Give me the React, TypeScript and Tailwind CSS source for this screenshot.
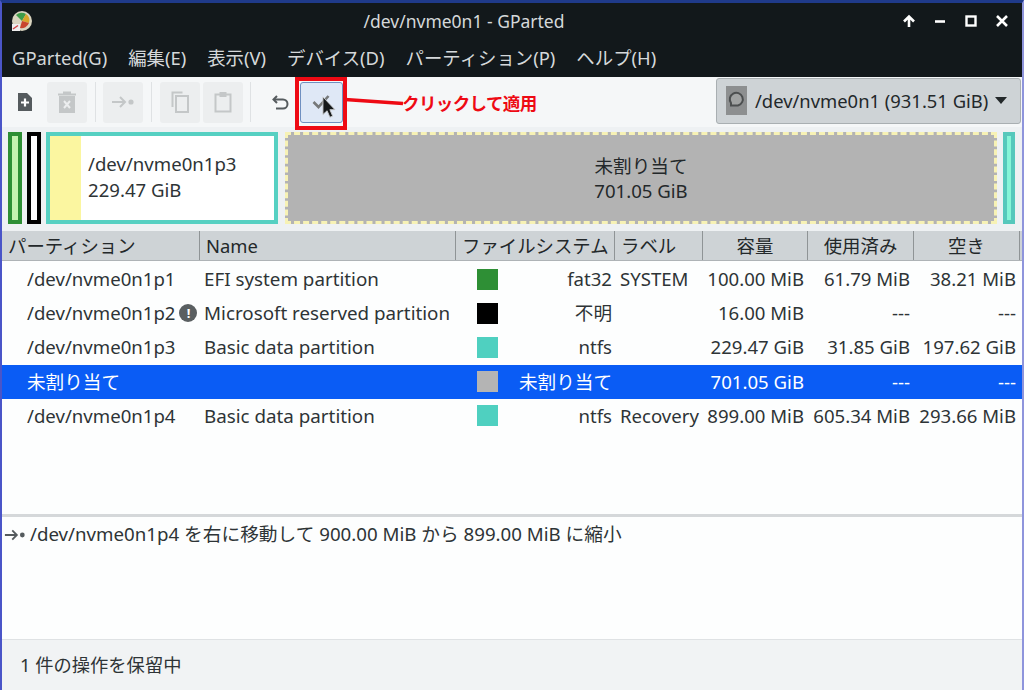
import React from "react";

const font = { fontFamily: '"Noto Sans","Noto Sans CJK JP",sans-serif' };
const cols = "grid grid-cols-[200px_256px_159px_88px_105px_106px_106px]";

const Sep = ({ className }: { className: string }) => <div className={`w-px h-[40px] bg-[#dfe2e4] ${className}`} />;

function ToolBtn({ children, className = "" }: { children: React.ReactNode; className?: string }) {
  return <div className={`w-10 h-[41px] rounded-[3px] bg-[#eceeef] flex items-center justify-center ${className}`}>{children}</div>;
}

const rows = [
  { d: "/dev/nvme0n1p1", warn: false, n: "EFI system partition", c: "bg-[#2e8f35]", fs: "fat32", l: "SYSTEM", s: "100.00 MiB", u: "61.79 MiB", f: "38.21 MiB" },
  { d: "/dev/nvme0n1p2", warn: true, n: "Microsoft reserved partition", c: "bg-black", fs: "不明", l: "", s: "16.00 MiB", u: "---", f: "---" },
  { d: "/dev/nvme0n1p3", warn: false, n: "Basic data partition", c: "bg-[#4fd0c0]", fs: "ntfs", l: "", s: "229.47 GiB", u: "31.85 GiB", f: "197.62 GiB" },
  { d: "未割り当て", warn: false, n: "", c: "bg-[#b4b4b4]", fs: "未割り当て", l: "", s: "701.05 GiB", u: "---", f: "---", sel: true },
  { d: "/dev/nvme0n1p4", warn: false, n: "Basic data partition", c: "bg-[#4fd0c0]", fs: "ntfs", l: "Recovery", s: "899.00 MiB", u: "605.34 MiB", f: "293.66 MiB" },
];

const headers = ["パーティション", "Name", "ファイルシステム", "ラベル", "容量", "使用済み", "空き"];

export default function App() {
  return (
    <div style={font} className="relative w-[1024px] h-[690px] overflow-hidden bg-[#fdfefe] text-[#2e3436] text-[18.6px] leading-[24px] border-l-2 border-r-2 border-t-[3px] border-l-[#4a55c8] border-r-[#8f95dc] border-t-[#1f3a8a] flex flex-col">
      {/* Title bar */}
      <div className="h-[35px] shrink-0 bg-[#12181b] flex items-center relative px-[9px]">
        <svg width="22" height="22" viewBox="0 0 22 22">
          <circle cx="11" cy="11" r="10" fill="#d9d4c0" />
          <path d="M11 11 L5 5 A8 8 0 0 1 15 4 Z" fill="#3f9c4a" />
          <path d="M11 11 L15 4 A8 8 0 0 1 18 13 Z" fill="#d9a52a" />
          <path d="M11 11 L18 13 A8 8 0 0 1 9 18 Z" fill="#c8452f" />
          <path d="M1 21 L1 14 L9 14 L9 21 Z" fill="#eeeeee" />
          <path d="M2 19 L7 15.5" stroke="#c44" strokeWidth="1.5" />
        </svg>
        <div className="absolute left-0 right-0 text-center text-[17.5px] text-[#d5d8da] pr-[96px]">/dev/nvme0n1 - GParted</div>
        <div className="ml-auto flex items-center gap-[17px] pr-[4px]">
          <svg width="14" height="14" viewBox="0 0 14 14" fill="none" stroke="#fff" strokeWidth="2.6"><path d="M7 13V3M2 7.5L7 2.5l5 5" /></svg>
          <svg width="14" height="14" viewBox="0 0 14 14" fill="none" stroke="#fff" strokeWidth="2.6"><path d="M2 7.5h10" /></svg>
          <svg width="14" height="14" viewBox="0 0 14 14" fill="none" stroke="#fff" strokeWidth="2.4"><rect x="2.5" y="2.5" width="9" height="9" /></svg>
          <svg width="14" height="14" viewBox="0 0 14 14" fill="none" stroke="#fff" strokeWidth="2.6"><path d="M2 2l10 10M12 2L2 12" /></svg>
        </div>
      </div>
      {/* Menu */}
      <div className="h-[39px] shrink-0 bg-[#12181b] text-[#d5d8da] text-[18.4px] flex items-center pl-[10px] gap-[21px]">
        {["GParted(G)", "編集(E)", "表示(V)", "デバイス(D)", "パーティション(P)", "ヘルプ(H)"].map((m) => (
          <span key={m}>{m}</span>
        ))}
      </div>
      {/* Toolbar */}
      <div className="h-[50px] shrink-0 bg-[#f5f7f8] flex items-center pl-[3px] relative">
        <div className="w-10 h-10 flex items-center justify-center">
          <svg width="18" height="20" viewBox="0 0 18 20"><path d="M2 1h9l5 5v13H2z" fill="#555b5e" /><path d="M9 6.5v8M5 10.5h8" stroke="#fff" strokeWidth="2.2" /></svg>
        </div>
        <ToolBtn className="ml-[2px]">
          <svg width="20" height="22" viewBox="0 0 20 22" fill="none" stroke="#c4c7c8" strokeWidth="2"><path d="M1 3.5h18M7 3.5V1.5h6v2" /><rect x="3" y="6" width="14" height="15" fill="#c4c7c8" /><path d="M7 10l6 7M13 10l-6 7" stroke="#eceeef" /></svg>
        </ToolBtn>
        <Sep className="ml-[8px] mr-[7px]" />
        <ToolBtn>
          <svg width="24" height="14" viewBox="0 0 24 14" fill="none" stroke="#c4c7c8" strokeWidth="2"><path d="M1 7h13M9 2l5 5-5 5" /><circle cx="20" cy="7" r="1.6" fill="#c4c7c8" /></svg>
        </ToolBtn>
        <Sep className="ml-[8px] mr-[8px]" />
        <ToolBtn>
          <svg width="18" height="22" viewBox="0 0 18 22" fill="none" stroke="#c4c7c8" strokeWidth="2"><path d="M1.5 16V1.5h10" /><rect x="5" y="5" width="12" height="16" /></svg>
        </ToolBtn>
        <ToolBtn className="ml-[3px]">
          <svg width="18" height="22" viewBox="0 0 18 22" fill="none" stroke="#c4c7c8" strokeWidth="2"><rect x="1.5" y="3.5" width="15" height="17" /><rect x="5.5" y="1" width="7" height="5" fill="#c4c7c8" stroke="none" /></svg>
        </ToolBtn>
        <Sep className="ml-[7px] mr-[9px]" />
        <div className="w-10 h-10 flex items-center justify-center">
          <svg width="17" height="15" viewBox="0 0 17 15" fill="none" stroke="#555b5e" strokeWidth="2"><path d="M5 1L1.5 4.5 5 8" /><path d="M2 4.5h9a4.5 4.5 0 0 1 0 9H4" /></svg>
        </div>
        <div className="w-[43px] h-[41px] rounded-[3px] border border-[#6f8fc0] bg-[#dfe8f6] flex items-center justify-center">
          <svg width="24" height="14" viewBox="0 0 24 14" fill="none" stroke="#77797a" strokeWidth="2.6"><path d="M3.5 7l5 5L18.5 1" /></svg>
        </div>
        <div className="ml-auto mt-[-3px] w-[305px] h-[46px] rounded-[3px] border border-[#a9afb2] bg-[#ced3d6] flex items-center pl-[9px] mr-[1px] whitespace-nowrap">
          <svg width="21" height="29" viewBox="0 0 21 29"><rect width="21" height="29" fill="#8d8f90" /><path d="M5 17 A6.5 6.5 0 1 1 12 19.5 L5 19.5 Z" fill="#a0a2a2" stroke="#4c4f50" strokeWidth="2" /></svg>
          <span className="ml-[8px] text-[#23282a] text-[18.4px]">/dev/nvme0n1 (931.51 GiB)</span>
          <svg className="ml-[7px]" width="12" height="7" viewBox="0 0 12 7"><path d="M0 0h12L6 7z" fill="#23282a" /></svg>
        </div>
      </div>
      {/* Disk map */}
      <div className="h-[104px] shrink-0 bg-[#eef1f3] flex items-start pt-[5px] pl-[6px]">
        <div className="w-[14px] h-[92px] bg-[#2e8f35] p-[4px]"><div className="h-full bg-[#c5f2b0]" /></div>
        <div className="w-[14px] h-[92px] bg-black p-[4px] ml-[5px]"><div className="h-full bg-white" /></div>
        <div className="w-[232px] h-[92px] bg-[#56d0c2] p-[4px] ml-[5px]">
          <div className="h-full bg-white flex">
            <div className="w-[31px] bg-[#fbf6a0]" />
            <div className="pl-[7px] pt-[15px] leading-[26px] text-[#2e3436] whitespace-nowrap">/dev/nvme0n1p3<br />229.47 GiB</div>
          </div>
        </div>
        <div className="w-[712px] h-[92px] ml-[7px] bg-[#b3b3b3] border-[3px] border-dashed border-[#f7f2b5] flex flex-col items-center justify-center leading-[25px] text-[#23282a]">
          <span>未割り当て</span>
          <span>701.05 GiB</span>
        </div>
        <div className="w-[12px] h-[92px] ml-[6px] bg-[#56c8bc] p-[4px]"><div className="h-full bg-[#86f5d8]" /></div>
      </div>
      {/* Table header */}
      <div className={`${cols} h-[30px] shrink-0 bg-[#ced3d6] text-[#23282a] text-[18.4px] -ml-[2px] border-b border-[#aeb3b6]`}>
        {headers.map((h, i) => (
          <div key={h} className={`flex items-center px-[6px] border-r border-[#8f9496] whitespace-nowrap overflow-hidden ${i === 0 ? "pl-[8px]" : ""} ${i >= 4 ? "justify-center" : ""}`}>{h}</div>
        ))}
      </div>
      {/* Rows */}
      <div className="h-[253px] shrink-0 bg-[#fdfefe] pt-[1px]">
        {rows.map((r) => (
          <div key={r.d + r.n} className={`${cols} h-[34.2px] items-center whitespace-nowrap -ml-[2px] ${r.sel ? "bg-[#0a5cf5] text-white" : ""}`}>
            <div className="pl-[27px] flex items-center">
              {r.d}
              {r.warn && (
                <span className="ml-[4px] w-[18px] h-[18px] rounded-full bg-[#5a5f61] text-white text-[13px] font-bold flex items-center justify-center">!</span>
              )}
            </div>
            <div className="pl-[4px] text-[18.8px]">{r.n}</div>
            <div className="flex items-center pl-[21px] pr-[3px]">
              <span className={`w-[21px] h-[21px] ${r.c}`} />
              <span className="ml-auto">{r.fs}</span>
            </div>
            <div className="pl-[5px]">{r.l}</div>
            <div className="text-right pr-[4px]">{r.s}</div>
            <div className="text-right pr-[4px]">{r.u}</div>
            <div className="text-right pr-[4px]">{r.f}</div>
          </div>
        ))}
      </div>
      {/* Log */}
      <div className="h-[125px] shrink-0 border-t-[3px] border-[#d5d8da] flex items-start pt-[5px] pl-[2px] text-[18.7px] whitespace-nowrap">
        <svg className="mt-[6px]" width="22" height="14" viewBox="0 0 24 14" fill="none" stroke="#555b5e" strokeWidth="2"><path d="M1 7h13M9 2l5 5-5 5" /><circle cx="20" cy="7" r="1.6" fill="#555b5e" /></svg>
        <span className="ml-[4px]">/dev/nvme0n1p4 を右に移動して 900.00 MiB から 899.00 MiB に縮小</span>
      </div>
      {/* Status */}
      <div className="flex-1 bg-[#f1f3f4] border-t border-[#dfe2e4] flex items-center pl-[18px] text-[18.3px]">1 件の操作を保留中</div>

      {/* Annotation */}
      <div className="absolute left-[293px] top-[74px] w-[52px] h-[53px] border-[4px] border-[#ee0a14]" />
      <svg className="absolute left-[343px] top-[94px]" width="58" height="10" viewBox="0 0 58 10">
        <path d="M0 2.5 L58 6.5" stroke="#ee0a14" strokeWidth="3.5" />
      </svg>
      <div className="absolute left-[400px] top-[88px] text-[17.5px] font-bold tracking-[-0.6px] text-[#ee0a14] whitespace-nowrap">クリックして適用</div>
      <svg className="absolute left-[319px] top-[93px]" width="15" height="24" viewBox="0 0 16 26">
        <path d="M2 1v19l4.5-4 3 7 3-1.2-3-7H15z" fill="#15181a" stroke="#c8cacc" strokeWidth="1" />
      </svg>
    </div>
  );
}
